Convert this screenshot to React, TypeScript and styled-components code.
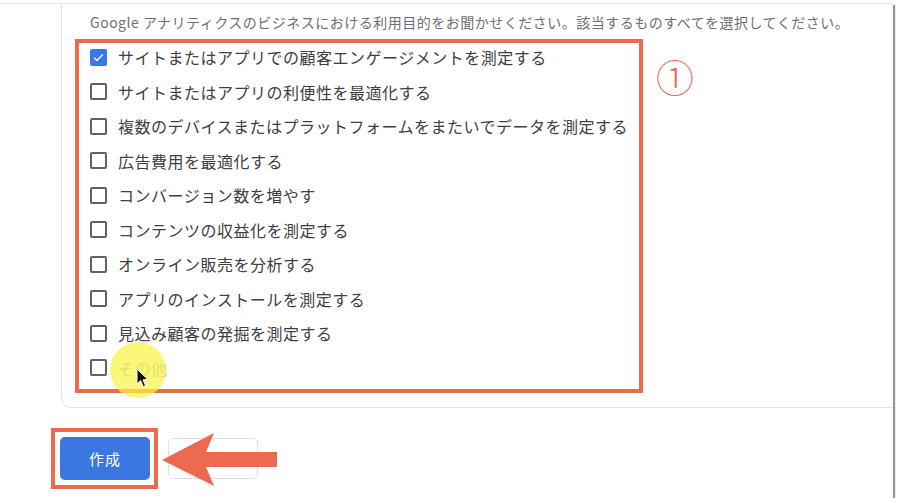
import React from "react";
import styled, { createGlobalStyle } from "styled-components";

const GlobalStyle = createGlobalStyle`
  html, body {
    margin: 0;
    padding: 0;
    background: #ffffff;
    font-family: "Noto Sans CJK JP", "Noto Sans", sans-serif;
  }
`;

const Frame = styled.div`
  width: 893px;
  height: 494px;
  margin-top: 3px;
  border-top: 1px solid #ececec;
  background: #ffffff;
  box-shadow: 2px 2px 1px rgba(0, 0, 0, 0.42);
  overflow: hidden;
  display: flex;
  flex-direction: column;
`;

const Card = styled.div`
  margin-left: 61px;
  margin-right: -20px;
  padding: 8px 0 14px 13px;
  border: 1px solid #e3e3e3;
  border-top: none;
  border-radius: 0 0 9px 9px;
  display: flex;
  flex-direction: column;
  gap: 7px;
`;

const Description = styled.p`
  margin: 0 0 0 15px;
  font-size: 14px;
  line-height: 20px;
  letter-spacing: 0.5px;
  color: #6b6f74;
  white-space: nowrap;
`;

const ListRow = styled.div`
  display: flex;
  align-items: flex-start;
`;

const Highlight = styled.div`
  box-sizing: border-box;
  width: 568px;
  border: 4px solid #ec6a4f;
  padding: 0 0 7px 11px;
  display: flex;
  flex-direction: column;
  gap: 6.5px;
`;

const Marker = styled.span`
  margin: 18px 0 0 13px;
  font-size: 38px;
  line-height: 38px;
  font-weight: 300;
  color: #ec6a4f;
`;

const Option = styled.label<{ $faded?: boolean }>`
  position: relative;
  height: 28px;
  display: flex;
  align-items: center;
  gap: 11px;
  font-size: 16px;
  letter-spacing: 0.5px;
  color: ${(p) => (p.$faded ? "#b4b4b4" : "#3c4043")};
  white-space: nowrap;
`;

const Box = styled.span<{ $checked?: boolean }>`
  width: 17px;
  height: 17px;
  box-sizing: border-box;
  border-radius: 2px;
  border: 2px solid ${(p) => (p.$checked ? "#3b78e7" : "#5f6368")};
  background: ${(p) => (p.$checked ? "#3b78e7" : "#ffffff")};
  display: flex;
  align-items: center;
  justify-content: center;
  flex-shrink: 0;
`;

const Spot = styled.span`
  position: absolute;
  left: 20px;
  top: -12px;
  width: 56px;
  height: 56px;
  border-radius: 50%;
  background: rgba(248, 244, 70, 0.72);
`;

const Pointer = styled.svg`
  position: absolute;
  left: 46px;
  top: 14px;
`;

const Footer = styled.div`
  position: relative;
  margin-top: 20px;
  padding-left: 51px;
  display: flex;
  align-items: center;
  gap: 10px;
`;

const ButtonFrame = styled.div`
  border: 4px solid #ec6a4f;
  padding: 5px 4px 5px 5px;
  display: flex;
`;

const PrimaryButton = styled.button`
  width: 90px;
  height: 43px;
  border: none;
  border-radius: 5px;
  background: #3a77e0;
  color: #ffffff;
  font-family: inherit;
  font-size: 15px;
  letter-spacing: 1px;
`;

const SecondaryButton = styled.button`
  width: 90px;
  height: 41px;
  border: 1px solid #e0e0e0;
  border-radius: 5px;
  background: #ffffff;
`;

const Arrow = styled.svg`
  position: absolute;
  left: 160px;
  top: 4px;
`;

const options = [
  "サイトまたはアプリでの顧客エンゲージメントを測定する",
  "サイトまたはアプリの利便性を最適化する",
  "複数のデバイスまたはプラットフォームをまたいでデータを測定する",
  "広告費用を最適化する",
  "コンバージョン数を増やす",
  "コンテンツの収益化を測定する",
  "オンライン販売を分析する",
  "アプリのインストールを測定する",
  "見込み顧客の発掘を測定する",
  "その他",
];

const App = () => {
  return (
    <>
      <GlobalStyle />
      <Frame>
        <Card>
          <Description>
            Google アナリティクスのビジネスにおける利用目的をお聞かせください。該当するものすべてを選択してください。
          </Description>
          <ListRow>
            <Highlight>
              {options.map((text, i) => {
                const last = i === options.length - 1;
                return (
                  <Option key={i} $faded={last}>
                    <Box $checked={i === 0}>
                      {i === 0 && (
                        <svg width="13" height="13" viewBox="0 0 24 24">
                          <path d="M4 12.5l5 5L20 6.5" fill="none" stroke="#fff" strokeWidth="2.6" />
                        </svg>
                      )}
                    </Box>
                    {text}
                    {last && <Spot />}
                    {last && (
                      <Pointer width="14" height="20" viewBox="0 0 14 20">
                        <path d="M1 1 L1 16 L4.6 12.6 L7.2 18.6 L9.6 17.6 L7 11.8 L12 11.6 Z" fill="#111" stroke="#fff" strokeWidth="1" />
                      </Pointer>
                    )}
                  </Option>
                );
              })}
            </Highlight>
            <Marker>①</Marker>
          </ListRow>
        </Card>
        <Footer>
          <ButtonFrame>
            <PrimaryButton>作成</PrimaryButton>
          </ButtonFrame>
          <SecondaryButton />
          <Arrow width="120" height="60" viewBox="0 0 120 60">
            <polygon points="2,28 54,1 46,20 117,20 117,35 46,35 54,54" fill="#ec6a4f" />
          </Arrow>
        </Footer>
      </Frame>
    </>
  );
};

export default App;
